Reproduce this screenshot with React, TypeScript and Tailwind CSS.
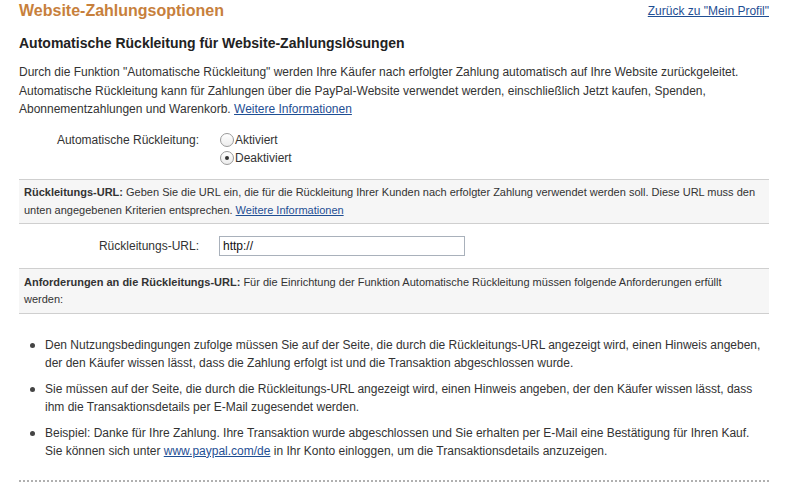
import React from "react";

const font = { fontFamily: '"Liberation Sans", Arial, sans-serif' };

function Radio({ checked, label }: { checked?: boolean; label: string }) {
  return (
    <div className="flex items-center h-[18px]">
      <span className="w-[14px] h-[14px] rounded-full border border-[#9a9a9a] bg-gradient-to-b from-white to-[#ececec] flex items-center justify-center mr-[1px]">
        {checked && <span className="w-[4px] h-[4px] rounded-full bg-[#333]" />}
      </span>
      <span>{label}</span>
    </div>
  );
}

function Bullet({ children }: { children: React.ReactNode }) {
  return (
    <li className="flex">
      <span className="w-[26px] shrink-0 flex pt-[7px]">
        <span className="ml-[11px] w-[5px] h-[5px] rounded-full bg-[#444]" />
      </span>
      <span>{children}</span>
    </li>
  );
}

export default function App() {
  return (
    <div className="w-[793px] h-[495px] bg-white text-[#333] overflow-hidden" style={font}>
      <div className="pl-[19px] pr-[24px] pt-[1px]">
        <div className="flex justify-between items-start">
          <h1 className="text-[16px] leading-[20px] font-bold text-[#c7803c]">Website-Zahlungsoptionen</h1>
          <a className="text-[12px] leading-[20px] text-[#1f4f94] underline">Zurück zu "Mein Profil"</a>
        </div>
        <h2 className="mt-[13px] text-[14px] leading-[18px] font-bold text-[#222]">
          Automatische Rückleitung für Website-Zahlungslösungen
        </h2>
        <p className="mt-[11px] text-[12px] leading-[18.5px]">
          Durch die Funktion "Automatische Rückleitung" werden Ihre Käufer nach erfolgter Zahlung automatisch auf Ihre Website zurückgeleitet.
          <br />
          Automatische Rückleitung kann für Zahlungen über die PayPal-Website verwendet werden, einschließlich Jetzt kaufen, Spenden,
          <br />
          Abonnementzahlungen und Warenkorb. <a className="text-[#1f4f94] underline">Weitere Informationen</a>
        </p>
        <div className="mt-[12px] flex text-[12px]">
          <div className="w-[180px] text-right leading-[18px]">Automatische Rückleitung:</div>
          <div className="ml-[21px] flex flex-col">
            <Radio label="Aktiviert" />
            <Radio checked label="Deaktiviert" />
          </div>
        </div>
        <div className="mt-[12px] bg-[#f6f6f6] border-y border-[#cfcfcf] px-[5px] pt-[3px] pb-[4px] text-[11px] leading-[18px]">
          <b>Rückleitungs-URL:</b> Geben Sie die URL ein, die für die Rückleitung Ihrer Kunden nach erfolgter Zahlung verwendet werden soll. Diese URL muss den
          <br />
          unten angegebenen Kriterien entsprechen. <a className="text-[#1f4f94] underline">Weitere Informationen</a>
        </div>
        <div className="mt-[12px] flex items-center text-[12px]">
          <div className="w-[180px] text-right">Rückleitungs-URL:</div>
          <div className="ml-[20px] w-[246px] h-[20px] border border-[#a9b1bb] flex items-center px-[3px] text-[#111]">
            http://
          </div>
        </div>
        <div className="mt-[12px] bg-[#f6f6f6] border-y border-[#cfcfcf] px-[5px] pt-[5px] pb-[5px] text-[11px] leading-[17px]">
          <b>Anforderungen an die Rückleitungs-URL:</b> Für die Einrichtung der Funktion Automatische Rückleitung müssen folgende Anforderungen erfüllt
          <br />
          werden:
        </div>
        <ul className="mt-[22px] text-[12px] leading-[18px] flex flex-col gap-[8px]">
          <Bullet>
            Den Nutzungsbedingungen zufolge müssen Sie auf der Seite, die durch die Rückleitungs-URL angezeigt wird, einen Hinweis angeben,
            <br />
            der den Käufer wissen lässt, dass die Zahlung erfolgt ist und die Transaktion abgeschlossen wurde.
          </Bullet>
          <Bullet>
            Sie müssen auf der Seite, die durch die Rückleitungs-URL angezeigt wird, einen Hinweis angeben, der den Käufer wissen lässt, dass
            <br />
            ihm die Transaktionsdetails per E-Mail zugesendet werden.
          </Bullet>
          <Bullet>
            Beispiel: Danke für Ihre Zahlung. Ihre Transaktion wurde abgeschlossen und Sie erhalten per E-Mail eine Bestätigung für Ihren Kauf.
            <br />
            Sie können sich unter <a className="text-[#1f4f94] underline">www.paypal.com/de</a> in Ihr Konto einloggen, um die Transaktionsdetails anzuzeigen.
          </Bullet>
        </ul>
        <div className="mt-[20px] border-b-2 border-dotted border-[#b0b0b0]" />
      </div>
    </div>
  );
}
